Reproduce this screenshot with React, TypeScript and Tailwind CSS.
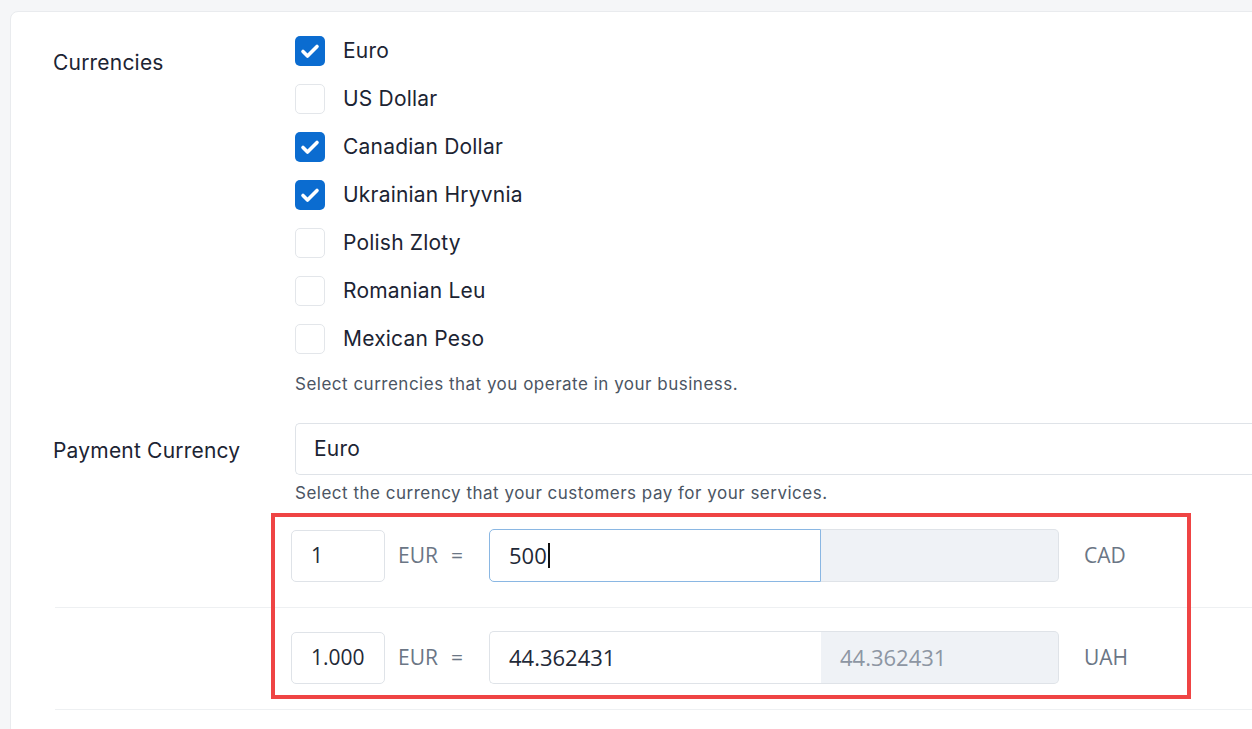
const currencies = [
  { name: "Euro", checked: true },
  { name: "US Dollar", checked: false },
  { name: "Canadian Dollar", checked: true },
  { name: "Ukrainian Hryvnia", checked: true },
  { name: "Polish Zloty", checked: false },
  { name: "Romanian Leu", checked: false },
  { name: "Mexican Peso", checked: false },
];

function CheckBox({ checked }: { checked: boolean }) {
  return (
    <span
      className={`size-[30px] shrink-0 rounded-[5px] flex items-center justify-center ${
        checked ? "bg-[#0b6cd0]" : "bg-white border border-[#e3e6ea]"
      }`}
    >
      {checked && (
        <svg viewBox="0 0 30 30" className="size-[30px]">
          <path
            d="M8 15.5l4.5 4.5 9.5-9.5"
            fill="none"
            stroke="white"
            strokeWidth={3.6}
            strokeLinecap="round"
            strokeLinejoin="round"
          />
        </svg>
      )}
    </span>
  );
}

function RateRow({
  base,
  value,
  placeholder,
  target,
  focused,
  last,
}: {
  base: string;
  value: string;
  placeholder: string;
  target: string;
  focused?: boolean;
  last?: boolean;
}) {
  return (
    <div
      className={`flex items-center pl-[236px] ${
        last ? "pt-[23px] pb-[25px]" : "pt-6 pb-[25px]"
      } border-b border-[#eef0f2]`}
      style={{ fontFamily: "'Open Sans', sans-serif" }}
    >
      <div className="w-[94px] h-[52px] rounded-[5px] border border-[#dfe3e8] bg-white flex items-center px-[19px] text-[21px] text-[#1f2937]">
        <div className="overflow-hidden whitespace-nowrap w-full">{base}</div>
      </div>
      <div className="w-[104px] pl-[13px] text-[21px] text-[#6b7685] flex gap-[13px]">
        <span>EUR</span>
        <span>=</span>
      </div>
      <div className="flex h-[53px]">
        <div
          className={`w-[332px] rounded-l-[5px] border flex items-center pl-[19px] text-[22px] text-[#1f2937] ${
            focused ? "border-[#8ab7e3]" : "border-[#dfe3e8] border-r-0"
          }`}
        >
          {value}
          {focused && <span className="w-[2px] h-[25px] bg-[#111] ml-[1px]" />}
        </div>
        <div className="w-[238px] rounded-r-[5px] border border-l-0 border-[#dfe3e8] bg-[#eff2f6] flex items-center pl-[19px] text-[22px] text-[#8d96a3]">
          {placeholder}
        </div>
      </div>
      <div className="pl-[25px] text-[21px] text-[#6b7685]">{target}</div>
    </div>
  );
}

export default function App() {
  return (
    <div
      className="w-[1252px] h-[729px] overflow-hidden bg-[#f5f6f8] pl-[10px] pt-[11px]"
      style={{ fontFamily: "Inter, sans-serif" }}
    >
      <div className="w-[1300px] h-[760px] bg-white rounded-tl-[8px] border border-[#e9ebee] pt-[15px]">
        <div className="flex pl-[42px]">
          <div className="w-[242px] pt-[20px] text-[21px] tracking-[0.2px] text-[#1c2433]">Currencies</div>
          <div className="flex flex-col">
            {currencies.map((c) => (
              <div key={c.name} className="flex items-center h-[48px] gap-[18px]">
                <CheckBox checked={c.checked} />
                <span className="text-[21px] tracking-[0.2px] text-[#1c2433]">{c.name}</span>
              </div>
            ))}
            <p className="mt-[9px] text-[17px] tracking-[0.5px] text-[#4b5563]">
              Select currencies that you operate in your business.
            </p>
          </div>
        </div>

        <div className="flex pl-[42px] mt-[25px]">
          <div className="w-[242px] pt-[12px] text-[21px] tracking-[0.2px] text-[#1c2433]">Payment Currency</div>
          <div className="flex-1 flex flex-col">
            <div className="h-[52px] rounded-l-[5px] border border-r-0 border-[#dfe3e8] flex items-center pl-[18px] text-[21px] tracking-[0.2px] text-[#1c2433]">
              Euro
            </div>
            <p className="mt-[6px] text-[17px] tracking-[0.5px] text-[#4b5563]">
              Select the currency that your customers pay for your services.
            </p>
          </div>
        </div>

        <div className="relative ml-[44px] mt-[-1px]">
          <RateRow base="1" value="500" placeholder="" target="CAD" focused />
          <RateRow base="1.000000" value="44.362431" placeholder="44.362431" target="UAH" last />
          <div className="absolute left-[216px] top-[8px] w-[920px] h-[186px] border-[4px] border-[#ef4444] pointer-events-none" />
        </div>
      </div>
    </div>
  );
}
